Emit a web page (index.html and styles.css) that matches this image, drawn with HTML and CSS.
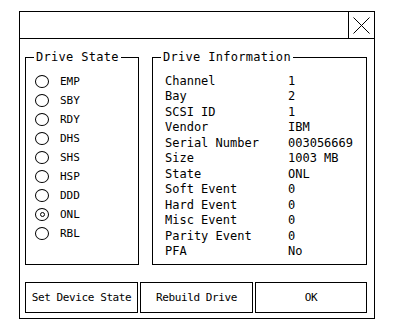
FILE: index.html
```html
<!DOCTYPE html>
<html lang="en">
<head>
    <meta charset="UTF-8">
    <title>Drive Properties</title>
    <link rel="stylesheet" href="styles.css">
</head>
<body>

<div class="dialog">
    <!-- Title bar -->
    <div class="titlebar">
        <div class="title"></div>
        <button class="close" type="button" aria-label="Close">
            <svg width="17" height="17" viewBox="0 0 17 17">
                <path d="M0.5 0.5 L16.5 16.5 M16.5 0.5 L0.5 16.5" stroke="#000" stroke-width="1" fill="none"/>
            </svg>
        </button>
    </div>

    <div class="content">
        <div class="groups">
            <!-- Drive state -->
            <fieldset class="group state-group">
                <legend>Drive State</legend>
                <ul class="radios">
                    <li><span class="radio"></span>EMP</li>
                    <li><span class="radio"></span>SBY</li>
                    <li><span class="radio"></span>RDY</li>
                    <li><span class="radio"></span>DHS</li>
                    <li><span class="radio"></span>SHS</li>
                    <li><span class="radio"></span>HSP</li>
                    <li><span class="radio"></span>DDD</li>
                    <li><span class="radio checked"></span>ONL</li>
                    <li><span class="radio"></span>RBL</li>
                </ul>
            </fieldset>

            <!-- Drive information -->
            <fieldset class="group info-group">
                <legend>Drive Information</legend>
                <dl class="info">
                    <dt>Channel</dt><dd>1</dd>
                    <dt>Bay</dt><dd>2</dd>
                    <dt>SCSI ID</dt><dd>1</dd>
                    <dt>Vendor</dt><dd>IBM</dd>
                    <dt>Serial Number</dt><dd>003056669</dd>
                    <dt>Size</dt><dd>1003 MB</dd>
                    <dt>State</dt><dd>ONL</dd>
                    <dt>Soft Event</dt><dd>0</dd>
                    <dt>Hard Event</dt><dd>0</dd>
                    <dt>Misc Event</dt><dd>0</dd>
                    <dt>Parity Event</dt><dd>0</dd>
                    <dt>PFA</dt><dd>No</dd>
                </dl>
            </fieldset>
        </div>

        <!-- Buttons -->
        <div class="actions">
            <button type="button">Set Device State</button>
            <button type="button">Rebuild Drive</button>
            <button type="button">OK</button>
        </div>
    </div>
</div>

</body>
</html>
```

FILE: styles.css
```css
body {
    margin: 0;
    padding: 11px 0 0 19px;
    background-color: #fff;
    color: #000;
    font-family: "DejaVu Sans Mono", monospace;
    font-size: 12px;
}
.dialog {
    width: 356px;
    height: 308px;
    box-sizing: border-box;
    border: 1px solid #000;
    display: flex;
    flex-direction: column;
}
.titlebar {
    height: 28px;
    box-sizing: border-box;
    border-bottom: 1px solid #000;
    display: flex;
}
.title {
    flex: 1;
}
.close {
    width: 26px;
    padding: 0;
    margin: 0;
    border: none;
    border-left: 1px solid #000;
    background: #fff;
    display: flex;
    align-items: center;
    justify-content: center;
}
.close svg {
    display: block;
}
.content {
    flex: 1;
    padding: 11px 7px 5px 5px;
    display: flex;
    flex-direction: column;
}
.groups {
    display: flex;
    gap: 13px;
    height: 215px;
}
.group {
    margin: 0;
    padding: 0;
    border: 1px solid #000;
    box-sizing: border-box;
    height: 215px;
    min-width: 0;
}
.group legend {
    margin-left: 8px;
    padding: 0 2px;
    line-height: 14px;
    letter-spacing: 0.3px;
}
.state-group {
    width: 114px;
}
.info-group {
    width: 215px;
}
.radios {
    list-style: none;
    margin: 0;
    padding: 8px 0 0 9px;
    font-size: 11px;
}
.radios li {
    height: 19px;
    display: flex;
    align-items: center;
}
.radio {
    width: 14px;
    height: 13px;
    box-sizing: border-box;
    border: 1px solid #000;
    border-radius: 50%;
    margin-right: 11px;
    display: flex;
    align-items: center;
    justify-content: center;
}
.radio.checked::after {
    content: "";
    width: 5px;
    height: 5px;
    box-sizing: border-box;
    border: 1px solid #000;
    border-radius: 50%;
}
.info {
    margin: 0;
    padding: 10px 0 0 12px;
    display: grid;
    grid-template-columns: 123px auto;
    line-height: 15.45px;
}
.info dt, .info dd {
    margin: 0;
    white-space: nowrap;
}
.actions {
    margin-top: 17px;
    display: grid;
    grid-template-columns: 113px 113px 112px;
    gap: 2px;
}
.actions button {
    height: 31px;
    margin: 0;
    padding: 0;
    border: 1px solid #000;
    background: #fff;
    color: #000;
    font-family: "DejaVu Sans Mono", monospace;
    font-size: 11px;
    letter-spacing: -0.4px;
}
```
